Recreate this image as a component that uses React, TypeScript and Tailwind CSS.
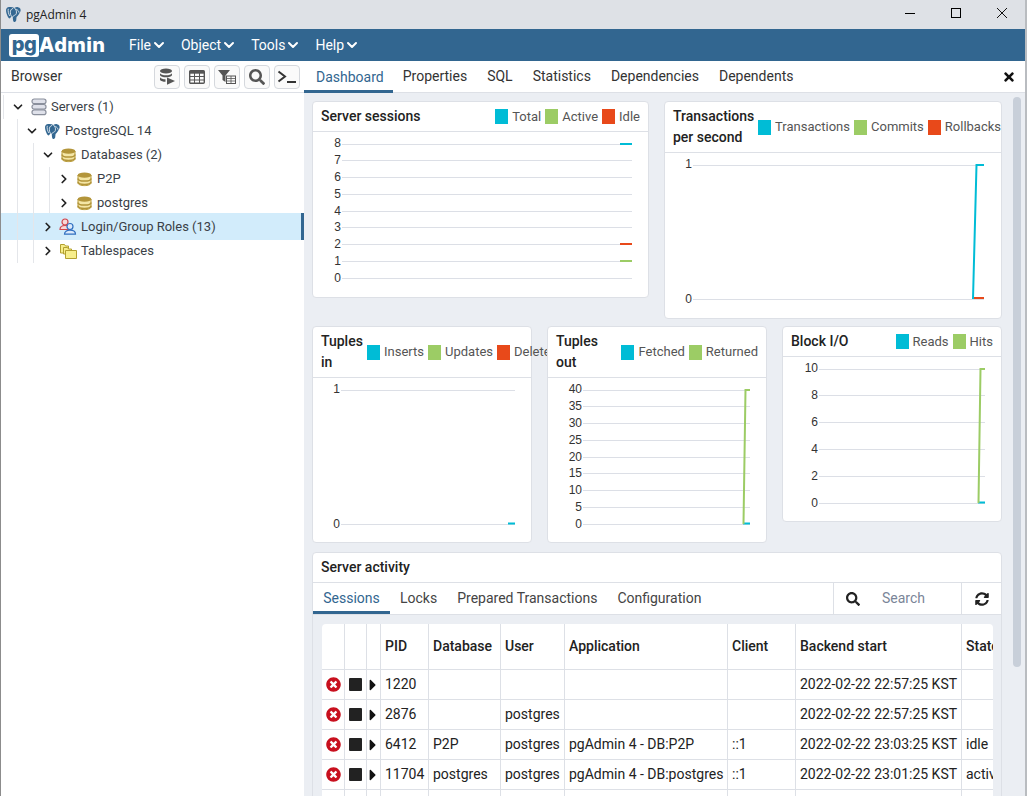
import React from "react";
import { ChevronDown, ChevronRight } from "lucide-react";
import { FaCaretRight, FaSearch, FaSyncAlt, FaTimes, FaTimesCircle } from "react-icons/fa";

const CYAN = "#00bcd6";
const GREEN = "#9ccc65";
const RED = "#e8491a";

function Elephant({ size = 18 }: { size?: number }) {
  return (
    <svg width={size} height={size} viewBox="0 0 24 24" className="shrink-0">
      <path
        d="M6 1.5C2.8 1.5 1 3.8 1.5 7.5C2 11 3.6 15.2 5.2 17C6.3 18.2 7.6 17.6 8.2 16L8.8 14.3C9.5 15 10.2 15.4 11 15.2C11 17.5 11.2 20.5 12 21.8C13 23 15.3 22.8 15.8 20.6L16.3 15.5C18.3 14 20 10.8 21.6 8.2C23 5 21.5 2 18.3 1.6C16.3 1.3 14.8 1.8 13.3 2.8C11.3 1.5 8.6 1.2 6 1.5Z"
        fill="#336791"
      />
      <path
        d="M11 3.5C8.5 4 7.3 6.5 7.6 9.5C7.8 11.5 8 13 8.8 14.3M13.3 2.8C15.5 4.5 16.8 7.5 16 10.5C15.5 12.5 14 13 13.2 13.2C12.2 13.5 11.4 14 11 15.2M16.5 5C18.5 6 19.5 7.2 19.7 8.8M4.5 4.5C3.8 7 5 11 6.3 13.5"
        fill="none"
        stroke="#fff"
        strokeWidth="1.1"
        strokeLinecap="round"
      />
    </svg>
  );
}

function ServersIcon() {
  return (
    <svg width="16" height="18" viewBox="0 0 16 18" className="shrink-0">
      {[1, 6.5, 12].map((y) => (
        <rect key={y} x="1" y={y} width="14" height="4.6" rx="2.2" fill="#dfe1ea" stroke="#8a8f9c" strokeWidth="1.2" />
      ))}
    </svg>
  );
}

function DbIcon() {
  return (
    <svg width="15" height="15" viewBox="0 0 15 15" className="shrink-0">
      <path d="M1 11v-8h13v8c0 1.5-3 2.6-6.500 2.600S1 12.500 1 11Z" fill="#f4e6a6" stroke="#b89b3a" strokeWidth="1" />
      <ellipse cx="7.500" cy="3.200" rx="6.800" ry="2.600" fill="#b3953a" />
      <path d="M1 6.500c0 1.500 3 2.600 6.500 2.600S14 8 14 6.500M1 9.800c0 1.500 3 2.600 6.500 2.600s6.500-1.100 6.500-2.600" fill="none" stroke="#b3953a" strokeWidth="1.500" />
    </svg>
  );
}

function RolesIcon() {
  return (
    <svg width="18" height="17" viewBox="0 0 18 17" className="shrink-0">
      <circle cx="6" cy="4" r="3" fill="#f8d7d7" stroke="#d0454c" strokeWidth="1.200" />
      <path d="M1 11.500c0-2.500 2-4 5-4s5 1.500 5 4Z" fill="#f8d7d7" stroke="#d0454c" strokeWidth="1.200" />
      <circle cx="11" cy="8.500" r="3" fill="#dbe9fb" stroke="#2f6fc0" strokeWidth="1.200" />
      <path d="M5.500 16.200c0-2.700 2.300-4 5.500-4s5.500 1.300 5.500 4Z" fill="#dbe9fb" stroke="#2f6fc0" strokeWidth="1.200" />
    </svg>
  );
}

function TablespaceIcon() {
  return (
    <svg width="17" height="16" viewBox="0 0 17 16" className="shrink-0">
      <path d="M.5 1.500h4l1 1.500h3v7h-8Z" fill="#f7ee8b" stroke="#b3a02f" />
      <path d="M3.500 4.500h4l1 1.500h3v5h-8Z" fill="#f7ee8b" stroke="#b3a02f" />
      <path d="M5.500 7.500h11v8h-11Z" fill="#f7ee8b" stroke="#b3a02f" />
    </svg>
  );
}

function QueryIcon() {
  return (
    <svg width="17" height="17" viewBox="0 0 17 17">
      <ellipse cx="7" cy="3" rx="6" ry="2.600" fill="#555" />
      <path d="M1 5.300c1 1.500 3 2 6 2s5-.500 6-2v2c-1 1.400-3 2-6 2s-5-.600-6-2Z" fill="#555" />
      <path d="M1 9.300c1 1.400 3 2 5.500 2v2.500C4 13.800 2 13.200 1 12Z" fill="#555" />
      <path d="M8 9.500l8 3.500-8 3.800Z" fill="#555" />
    </svg>
  );
}

function GridIcon() {
  return (
    <svg width="16" height="14" viewBox="0 0 16 14">
      <rect x=".7" y=".7" width="14.600" height="12.600" rx="1" fill="none" stroke="#555" strokeWidth="1.400" />
      <rect x=".7" y=".7" width="14.600" height="3" fill="#555" />
      <path d="M.7 6.500h14.600M.7 10h14.600M5.500 3v10M10.500 3v10" stroke="#555" strokeWidth="1" />
    </svg>
  );
}

function FilterTableIcon() {
  return (
    <svg width="18" height="15" viewBox="0 0 18 15">
      <path d="M0 1h12L7.500 6.500V13L4.500 11V6.500Z" fill="#555" />
      <rect x="8.500" y="7" width="9" height="7.500" fill="none" stroke="#555" />
      <path d="M8.500 9.500h9M8.500 12h9M13 7v7.500" stroke="#555" strokeWidth=".8" />
    </svg>
  );
}

function TerminalIcon() {
  return (
    <svg width="20" height="14" viewBox="0 0 20 14">
      <path d="M1.500 1.500L8 6.500 1.500 11.500" fill="none" stroke="#333" strokeWidth="2" />
      <path d="M10 12h9" stroke="#333" strokeWidth="2" />
    </svg>
  );
}

const toolButtons = [
  <QueryIcon key="q" />,
  <GridIcon key="g" />,
  <FilterTableIcon key="f" />,
  <FaSearch key="s" size={16} color="#555" />,
  <TerminalIcon key="t" />,
];

function Guide({ className }: { className: string }) {
  return <span className={`absolute top-0 bottom-0 w-px bg-[#e4e6ea] ${className}`} />;
}

function TreeRow({
  pad,
  open,
  icon,
  label,
  gap,
  guides,
  selected,
}: {
  pad: string;
  open: boolean;
  icon: React.ReactNode;
  label: string;
  gap: string;
  guides: string[];
  selected?: boolean;
}) {
  return (
    <div
      className={
        selected
          ? `relative flex items-center h-[27px] -mt-[2px] -mb-px bg-[#d2ecfb] border-r-[3px] border-[#326690] ${pad}`
          : `relative flex items-center h-6 ${pad}`
      }
    >
      {guides.map((g) => (
        <Guide key={g} className={g} />
      ))}
      <span className="w-3 flex justify-center shrink-0">
        {open ? <ChevronDown size={14} strokeWidth={3} color="#222" className="shrink-0" /> : <ChevronRight size={14} strokeWidth={3} color="#222" className="shrink-0" />}
      </span>
      <span className={`flex items-center ${gap}`}>{icon}</span>
      <span className="text-[13px] text-[#3a3f47] whitespace-nowrap">{label}</span>
    </div>
  );
}

function Legend({ items }: { items: [string, string][] }) {
  return (
    <div className="flex items-center shrink-0 ml-auto gap-[4px]">
      {items.map(([label, color]) => (
        <div key={label} className="flex items-center gap-1 whitespace-nowrap text-[13px] text-[#555]">
          <span className="w-[13px] h-[15px]" style={{ background: color }} />
          <span>{label}</span>
        </div>
      ))}
    </div>
  );
}

type Tick = [string, number];
type Series = [string, string];

function Chart({
  x,
  y,
  w,
  h,
  x0,
  x1,
  ticks,
  series,
}: {
  x: number;
  y: number;
  w: number;
  h: number;
  x0: number;
  x1: number;
  ticks: Tick[];
  series: Series[];
}) {
  return (
    <svg width={w} height={h} viewBox={`${x} ${y} ${w} ${h}`} className="block">
      {ticks.map(([label, ty], i) => (
        <g key={label}>
          <line x1={x0} x2={x1} y1={ty + 0.5} y2={ty + 0.5} stroke="#dcdfe6" strokeWidth="1" />
          <text x={x0 - 1} y={i === 0 ? ty + 3 : ty + 3.5} textAnchor="end" fontSize="12" fill="#333" fontFamily="Liberation Sans, sans-serif">
            {label}
          </text>
        </g>
      ))}
      {series.map(([d, color]) => (
        <path key={d} d={d} fill="none" stroke={color} strokeWidth="2" />
      ))}
    </svg>
  );
}

function Card({
  title,
  titleClass,
  legend,
  className,
  children,
}: {
  title: string;
  titleClass?: string;
  legend: [string, string][];
  className: string;
  children: React.ReactNode;
}) {
  return (
    <div className={`relative bg-white border border-[#dde0e6] rounded-[4px] ${className}`}>
      <div className="flex items-center px-2 py-1 border-b border-[#dde0e6]">
        <div className={`text-[14px] leading-[21px] font-medium text-[#222] shrink-0 ${titleClass ?? "whitespace-nowrap"}`}>{title}</div>
        <Legend items={legend} />
      </div>
      {children}
    </div>
  );
}

const rows = [
  ["1220", "", "", "", "", "2022-02-22 22:57:25 KST", ""],
  ["2876", "", "postgres", "", "", "2022-02-22 22:57:25 KST", ""],
  ["6412", "P2P", "postgres", "pgAdmin 4 - DB:P2P", "::1", "2022-02-22 23:03:25 KST", "idle"],
  ["11704", "postgres", "postgres", "pgAdmin 4 - DB:postgres", "::1", "2022-02-22 23:01:25 KST", "active"],
];

const headers = ["", "", "", "PID", "Database", "User", "Application", "Client", "Backend start", "State"];
const cell = "border-r border-b border-[#dde0e6] px-1 whitespace-nowrap overflow-hidden";

export default function App() {
  return (
    <div className="w-[1027px] h-[796px] overflow-hidden flex flex-col bg-white border-l border-r-2 border-l-[#8c8c8c] border-r-[#b9bcc0] font-['Roboto',sans-serif] text-[14px]">
      <div className="h-[29px] shrink-0 bg-[#dee1e6] flex items-center pl-[4px]">
        <Elephant size={17} />
        <span className="ml-[4px] text-[12px] font-['Open_Sans',sans-serif] text-[#222]">pgAdmin 4</span>
        <div className="ml-auto flex items-center gap-[36px] pr-[18px] mb-[3px]">
          <span className="w-[10px] h-px bg-black" />
          <span className="w-[10px] h-[10px] border border-black" />
          <svg width="10" height="10" viewBox="0 0 10 10">
            <path d="M0 0l10 10M10 0L0 10" stroke="#111" strokeWidth="1" />
          </svg>
        </div>
      </div>

      <div className="h-8 shrink-0 bg-[#326690] flex items-center pl-2 text-white">
        <div className="flex items-center w-[120px]">
          <span className="w-[30px] h-[23px] bg-white rounded-[3px] text-[#326690] font-['Inter',sans-serif] font-extrabold text-[20px] leading-[20px] text-center tracking-[-0.5px]">pg</span>
          <span className="font-['Inter',sans-serif] font-extrabold text-[20px] tracking-[0.4px]">Admin</span>
        </div>
        <div className="flex items-center gap-[14px] text-[14px]">
          {["File", "Object", "Tools", "Help"].map((m) => (
            <span key={m} className="flex items-center">
              {m}
              <ChevronDown size={16} strokeWidth={3} />
            </span>
          ))}
        </div>
      </div>

      <div className="flex-1 flex min-h-0">
        <div className="w-[303px] shrink-0 bg-white">
          <div className="h-8 flex items-center pl-[10px] border-b border-[#dde0e6]">
            <span className="text-[#333]">Browser</span>
            <div className="ml-auto flex gap-1 pr-[4px]">
              {toolButtons.map((b, i) => (
                <span key={i} className="w-[26px] h-6 flex items-center justify-center border border-[#d5d8dd] rounded-[4px] bg-[#fafafa]">
                  {b}
                </span>
              ))}
            </div>
          </div>
          <div className="pt-[2px]">
            <TreeRow pad="pl-[11px]" open gap="ml-[7px] mr-[4px]" icon={<ServersIcon />} label="Servers (1)" guides={["left-[2px]"]} />
            <TreeRow pad="pl-[25px]" open gap="ml-[6px] mr-[4px]" icon={<Elephant size={17} />} label="PostgreSQL 14" guides={["left-[16px]"]} />
            <TreeRow pad="pl-[41px]" open gap="ml-[7px] mr-[5px]" icon={<DbIcon />} label="Databases (2)" guides={["left-[16px]", "left-[32px]"]} />
            <TreeRow pad="pl-[57px]" open={false} gap="ml-[7px] mr-[5px]" icon={<DbIcon />} label="P2P" guides={["left-[16px]", "left-[32px]", "left-[48px]"]} />
            <TreeRow pad="pl-[57px]" open={false} gap="ml-[7px] mr-[5px]" icon={<DbIcon />} label="postgres" guides={["left-[16px]", "left-[32px]", "left-[48px]"]} />
            <TreeRow pad="pl-[41px]" open={false} gap="ml-[5px] mr-[4px]" icon={<RolesIcon />} label="Login/Group Roles (13)" guides={["left-[16px]", "left-[32px]"]} selected />
            <TreeRow pad="pl-[41px]" open={false} gap="ml-[6px] mr-[4px]" icon={<TablespaceIcon />} label="Tablespaces" guides={["left-[16px]", "left-[32px]"]} />
          </div>
        </div>

        <div className="flex-1 min-w-0 flex flex-col bg-[#ebeef3]">
          <div className="h-8 shrink-0 flex items-stretch bg-white border-b border-[#dde0e6]">
            <span className="pl-3 pr-[9px] pt-[3px] flex items-center text-[#326690] border-b-[3px] border-[#326690] -mb-px">Dashboard</span>
            {["Properties", "SQL", "Statistics", "Dependencies", "Dependents"].map((t) => (
              <span key={t} className="px-[10px] flex items-center text-[#333]">
                {t}
              </span>
            ))}
            <span className="ml-auto pr-[9px] flex items-center">
              <FaTimes size={14} color="#111" />
            </span>
          </div>

          <div className="flex-1 min-h-0 flex">
            <div className="w-[708px] shrink-0 pl-2 pr-[10px] pt-2 overflow-hidden">
              <div className="grid grid-cols-[337px_338px] gap-[15px] items-start mb-[7px]">
                <Card
                  title="Server sessions"
                  className="h-[197px]"
                  legend={[["Total", CYAN], ["Active", GREEN], ["Idle", RED]]}
                >
                  <Chart
                    x={313}
                    y={132}
                    w={335}
                    h={164}
                    x0={342}
                    x1={632}
                    ticks={[["8", 144], ["7", 160], ["6", 177], ["5", 194], ["4", 211], ["3", 227], ["2", 244], ["1", 261], ["0", 278]]}
                    series={[["M620 144H632", CYAN], ["M620 244H632", RED], ["M620 261H632", GREEN]]}
                  />
                </Card>
                <Card
                  title="Transactions per second"
                  titleClass="w-[85px]"
                  className="h-[218px]"
                  legend={[["Transactions", CYAN], ["Commits", GREEN], ["Rollbacks", RED]]}
                >
                  <Chart
                    x={665}
                    y={153}
                    w={336}
                    h={164}
                    x0={693}
                    x1={984}
                    ticks={[["1", 165], ["0", 299]]}
                    series={[["M973 298H984", RED], ["M973 299L976.500 165H984", CYAN]]}
                  />
                </Card>
              </div>

              <div className="grid grid-cols-3 gap-[15px] items-start mb-[9px]">
                <Card
                  title="Tuples in"
                  titleClass="w-[46px]"
                  className="h-[217px]"
                  legend={[["Inserts", CYAN], ["Updates", GREEN], ["Deletes", RED]]}
                >
                  <Chart
                    x={313}
                    y={378}
                    w={218}
                    h={164}
                    x0={341}
                    x1={515}
                    ticks={[["1", 390], ["0", 524]]}
                    series={[["M508 523.500H515", CYAN]]}
                  />
                </Card>
                <Card
                  title="Tuples out"
                  titleClass="w-[46px]"
                  className="h-[217px]"
                  legend={[["Fetched", CYAN], ["Returned", GREEN]]}
                >
                  <Chart
                    x={548}
                    y={378}
                    w={218}
                    h={164}
                    x0={583}
                    x1={750}
                    ticks={[["40", 390], ["35", 406], ["30", 423], ["25", 440], ["20", 457], ["15", 473], ["10", 490], ["5", 507], ["0", 524]]}
                    series={[["M743 523.500H750", CYAN], ["M743.500 524L745.500 390H750", GREEN]]}
                  />
                </Card>
                <Card
                  title="Block I/O"
                  className="h-[196px]"
                  legend={[["Reads", CYAN], ["Hits", GREEN]]}
                >
                  <Chart
                    x={783}
                    y={357}
                    w={218}
                    h={164}
                    x0={819}
                    x1={985}
                    ticks={[["10", 369], ["8", 395], ["6", 422], ["4", 449], ["2", 476], ["0", 503]]}
                    series={[["M978 502.500H985", CYAN], ["M978.500 503L980.500 369H985", GREEN]]}
                  />
                </Card>
              </div>

              <div className="bg-white border border-[#dde0e6] rounded-t-[4px]">
                <div className="h-[30px] flex items-center px-2 pb-px border-b border-[#dde0e6] font-medium text-[#222]">Server activity</div>
                <div className="h-8 flex items-stretch border-b border-[#dde0e6]">
                  <span className="w-[77px] pt-[3px] flex items-center justify-center text-[#326690] border-b-[3px] border-[#326690]">Sessions</span>
                  {["Locks", "Prepared Transactions", "Configuration"].map((t) => (
                    <span key={t} className="px-[10px] flex items-center text-[#444]">
                      {t}
                    </span>
                  ))}
                  <div className="ml-auto flex items-stretch">
                    <div className="w-[128px] flex items-center border-l border-[#dde0e6] pl-[12px]">
                      <FaSearch size={14} color="#222" />
                      <span className="ml-[22px] text-[#7a8598]">Search</span>
                    </div>
                    <div className="w-[40px] flex items-center justify-center border-l border-[#dde0e6]">
                      <FaSyncAlt size={14} color="#222" />
                    </div>
                  </div>
                </div>
                <div className="bg-[#ebeef3] pl-[9px] pr-[8px] pt-[9px]">
                  <div className="bg-white rounded-t-[4px] overflow-hidden w-[671px]">
                    <table className="table-fixed border-separate border-spacing-0 w-[741px] text-[14px] text-[#222]">
                      <colgroup>
                        <col className="w-[23px]" />
                        <col className="w-[22px]" />
                        <col className="w-[14px]" />
                        <col className="w-[48px]" />
                        <col className="w-[72px]" />
                        <col className="w-[64px]" />
                        <col className="w-[163px]" />
                        <col className="w-[68px]" />
                        <col className="w-[166px]" />
                        <col className="w-[101px]" />
                      </colgroup>
                      <thead>
                        <tr className="h-[46px]">
                          {headers.map((h, i) => (
                            <th key={i} className={`${cell} font-medium text-left`}>
                              {h}
                            </th>
                          ))}
                        </tr>
                      </thead>
                      <tbody>
                        {rows.map((r) => (
                          <tr key={r[0]} className="h-[30px]">
                            <td className={`${cell} pl-[4px]`}>
                              <FaTimesCircle size={15} color="#c8101e" />
                            </td>
                            <td className={`${cell} pl-[4px]`}>
                              <span className="block w-[13px] h-[13px] bg-[#222] rounded-[1px]" />
                            </td>
                            <td className={`${cell} pl-0 pr-0`}>
                              <FaCaretRight size={18} color="#111" className="-ml-[3px]" />
                            </td>
                            {r.map((v, i) => (
                              <td key={i} className={cell}>
                                {v}
                              </td>
                            ))}
                          </tr>
                        ))}
                        <tr className="h-[30px]">
                          {headers.map((_, i) => (
                            <td key={i} className={cell} />
                          ))}
                        </tr>
                      </tbody>
                    </table>
                  </div>
                </div>
              </div>
            </div>
            <div className="w-[13px] shrink-0 pt-1 pl-px">
              <div className="w-[8px] h-[570px] bg-[#c8cfd9] rounded-[4px]" />
            </div>
          </div>
        </div>
      </div>
    </div>
  );
}
